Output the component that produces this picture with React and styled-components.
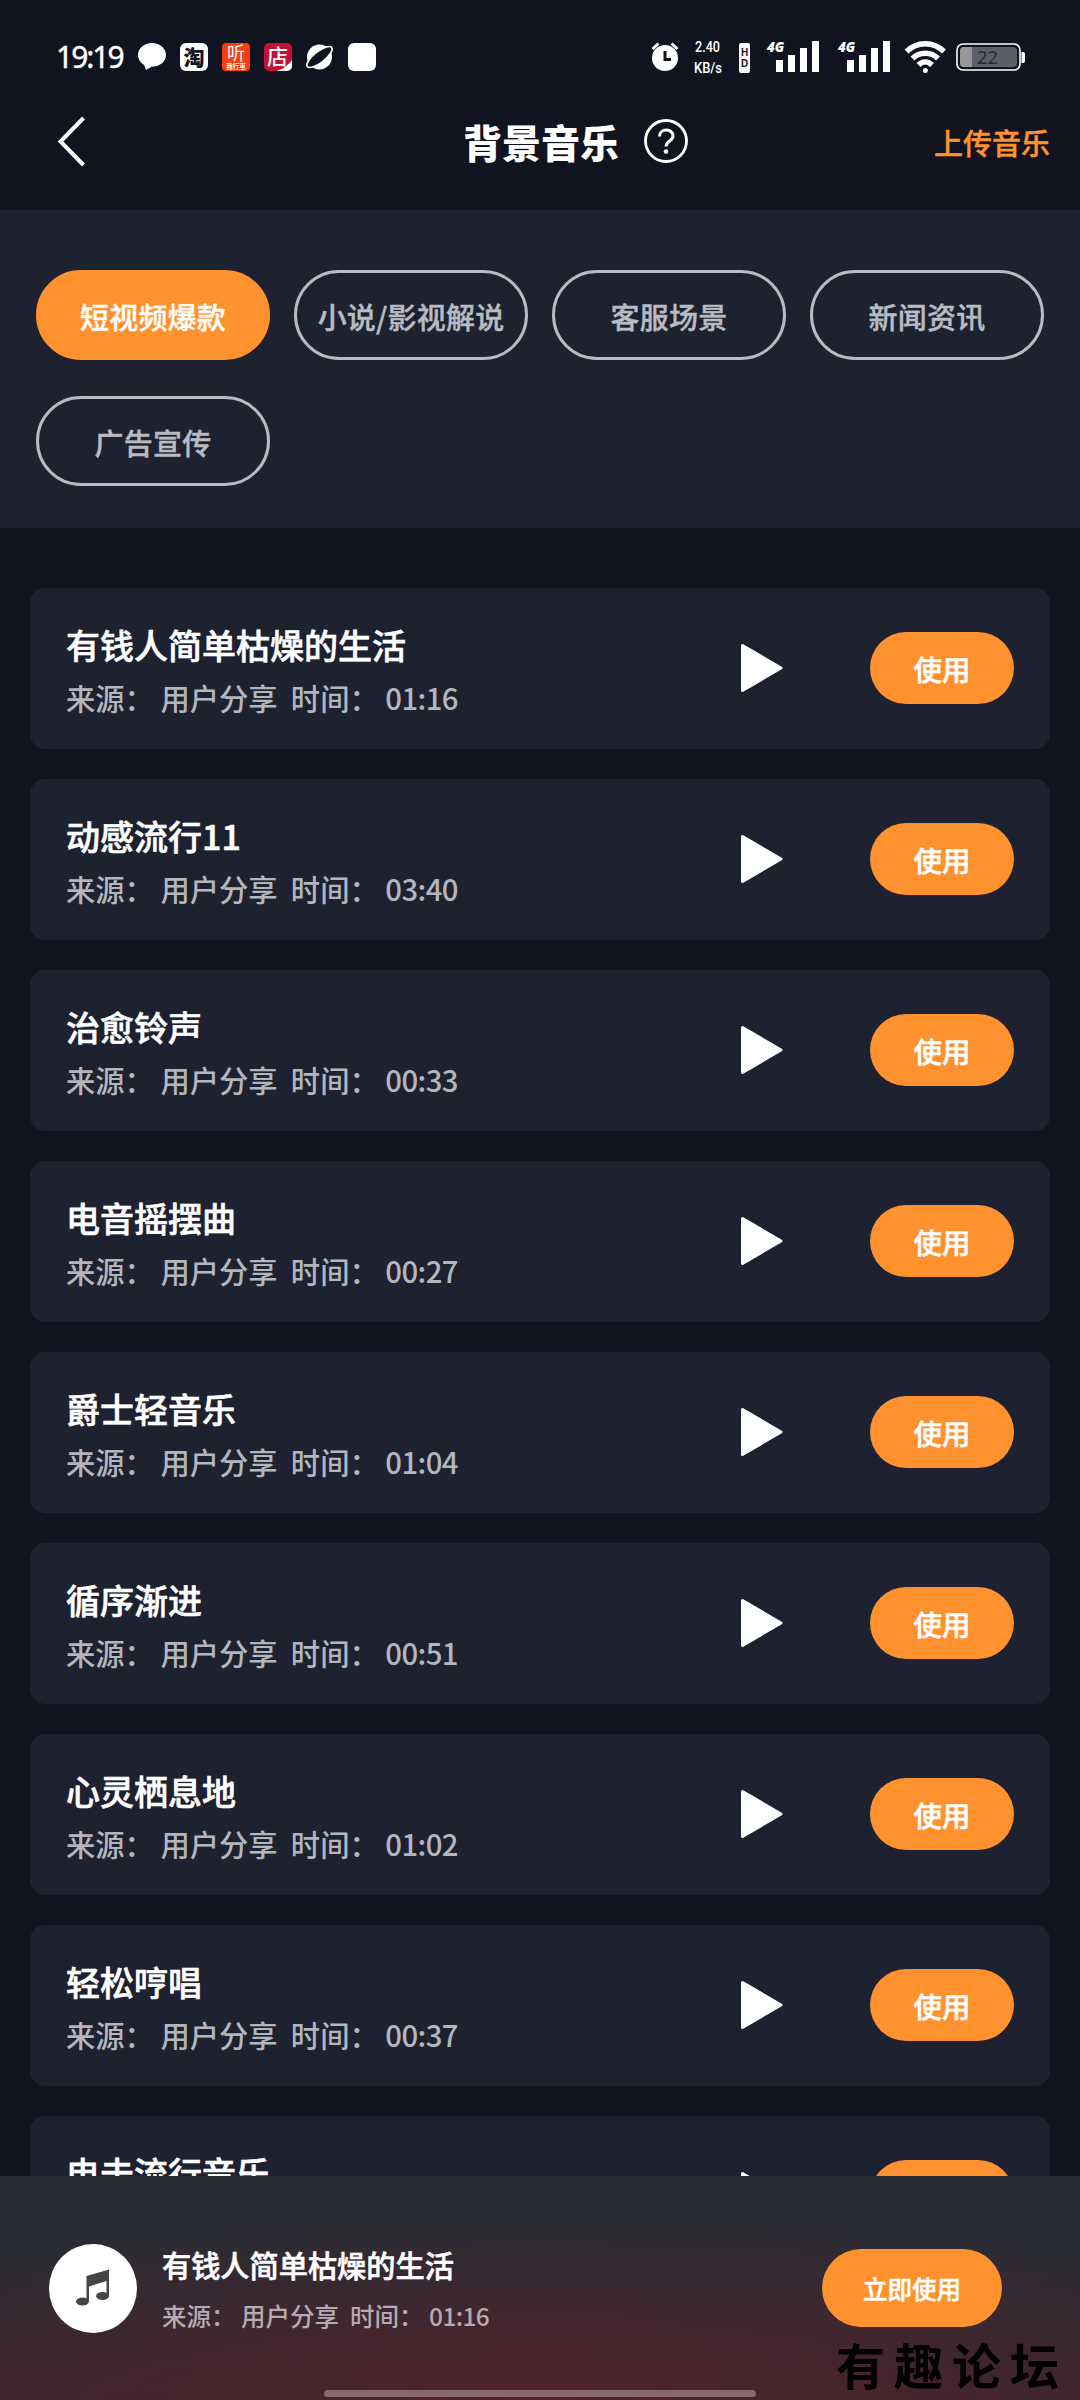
import React from 'react';
import styled, { createGlobalStyle } from 'styled-components';

const GlobalStyle = createGlobalStyle`
  * {
    box-sizing: border-box;
  }
  body {
    margin: 0;
    background: #111320;
    font-family: 'Noto Sans CJK SC', sans-serif;
  }
  button {
    border: 0;
    padding: 0;
    font-family: inherit;
  }
`;

const Screen = styled.div`
  display: flex;
  flex-direction: column;
  width: 1080px;
  height: 2400px;
  overflow: hidden;
  background: #111320;
  color: #fff;
`;

const StatusBar = styled.div`
  display: flex;
  justify-content: space-between;
  flex: none;
  height: 90px;
  padding: 24px 53px 0 56px;
`;

const StatusGroup = styled.div`
  display: flex;
  align-items: center;
  height: 66px;
  padding-top: ${(props) => (props.$system ? '6px' : '0')};
`;

const Clock = styled.span`
  width: 68px;
  margin-right: 14px;
  font-family: 'Noto Sans', sans-serif;
  font-size: 30px;
  line-height: 66px;
  letter-spacing: -2px;
  white-space: nowrap;
  -webkit-text-stroke: 0.4px currentColor;
`;

const StatusSvg = styled.svg`
  display: block;
  flex: none;
  overflow: visible;
`;

const Header = styled.header`
  display: grid;
  grid-template-columns: 180px 1fr 180px;
  align-items: center;
  flex: none;
  height: 120px;
  padding: 0 30px 18px;
`;

const BackButton = styled.button`
  width: 60px;
  height: 60px;
  background: none;
`;

const PageTitle = styled.h1`
  display: flex;
  align-items: center;
  justify-content: center;
  gap: 24px;
  margin: 0;
  padding-left: 72px;
  font-size: 39px;
  font-weight: 900;
  line-height: 60px;
`;

const UploadLink = styled.a`
  justify-self: end;
  padding-top: 2px;
  color: #ff922f;
  font-size: 29px;
  font-weight: 500;
  -webkit-text-stroke: 0.4px currentColor;
`;

const Categories = styled.nav`
  display: flex;
  flex-wrap: wrap;
  align-content: flex-start;
  gap: 36px 24px;
  flex: none;
  height: 318px;
  padding: 60px 36px 0;
  background: #1e2130;
`;

const Category = styled.button`
  width: 234px;
  height: 90px;
  padding-top: 2px;
  border: 3px solid ${(props) => (props.$active ? '#ff922f' : '#b9bbc4')};
  border-radius: 45px;
  background: ${(props) => (props.$active ? '#ff922f' : 'transparent')};
  color: ${(props) => (props.$active ? '#fff' : '#b9bbc4')};
  font-size: 29px;
  font-weight: 500;
  letter-spacing: 0.2px;
  white-space: nowrap;
  -webkit-text-stroke: 0.4px currentColor;
`;

const TrackList = styled.main`
  display: flex;
  flex-direction: column;
  gap: 30px;
  flex: 1;
  min-height: 0;
  padding: 60px 30px 0;
  overflow: hidden;
`;

const TrackRow = styled.div`
  display: flex;
  align-items: center;
  flex: none;
  height: 161px;
  padding: 0 36px 1px;
  border-radius: 15px;
  background: #1e2130;
`;

const TrackInfo = styled.div`
  flex: 1;
  padding-top: ${(props) => (props.$small ? '2px' : '6px')};
`;

const TrackName = styled.div`
  color: #fff;
  font-size: ${(props) => (props.$small ? '29.2px' : '34px')};
  font-weight: 500;
  line-height: ${(props) => (props.$small ? '42px' : '50px')};
  -webkit-text-stroke: 0.6px currentColor;
`;

const TrackMeta = styled.div`
  margin-top: ${(props) => (props.$small ? '11px' : '2px')};
  color: ${(props) => (props.$small ? '#b5abb0' : '#b4b6be')};
  font-size: ${(props) => (props.$small ? '24.5px' : '29.3px')};
  font-weight: 500;
  line-height: ${(props) => (props.$small ? '40px' : '50px')};
  white-space: pre;
`;

const Duration = styled.span`
  letter-spacing: -0.6px;
`;

const PlayButton = styled.button`
  width: 44px;
  height: 50px;
  margin-right: 86px;
  background: none;
`;

const UseButton = styled.button`
  width: ${(props) => (props.$large ? '180px' : '144px')};
  height: ${(props) => (props.$large ? '78px' : '72px')};
  padding-top: 1px;
  border-radius: 39px;
  background: #ff922f;
  color: #fff;
  font-size: ${(props) => (props.$large ? '24.5px' : '28.5px')};
  font-weight: 500;
  -webkit-text-stroke: 0.5px currentColor;
`;

const Player = styled.footer`
  position: relative;
  display: flex;
  align-items: center;
  flex: none;
  height: 224px;
  padding: 0 78px 0 49px;
  background:
    radial-gradient(ellipse 900px 190px at 50% 100%, rgba(90, 32, 42, 0.75), rgba(90, 32, 42, 0) 100%),
    linear-gradient(#292c33 0%, #2a2c33 35%, #35282f 100%);
`;

const Cover = styled.div`
  display: flex;
  align-items: center;
  justify-content: center;
  width: 88px;
  height: 89px;
  margin-right: 25px;
  border-radius: 50%;
  background: #fff;
`;

const HomeBar = styled.div`
  position: absolute;
  left: 324px;
  bottom: 3px;
  width: 432px;
  height: 7px;
  border-radius: 4px;
  background: #87696e;
`;

const Watermark = styled.div`
  position: absolute;
  right: 12px;
  bottom: 6px;
  color: #000;
  font-size: 49px;
  font-weight: 700;
  line-height: 60px;
  letter-spacing: 9px;
`;

const categories = ['短视频爆款', '小说/影视解说', '客服场景', '新闻资讯', '广告宣传'];

const tracks = [
  { name: '有钱人简单枯燥的生活', time: '01:16' },
  { name: '动感流行11', time: '03:40' },
  { name: '治愈铃声', time: '00:33' },
  { name: '电音摇摆曲', time: '00:27' },
  { name: '爵士轻音乐', time: '01:04' },
  { name: '循序渐进', time: '00:51' },
  { name: '心灵栖息地', time: '01:02' },
  { name: '轻松哼唱', time: '00:37' },
  { name: '电击流行音乐' },
];

const cjk = "'Noto Sans CJK SC', sans-serif";

const NotificationIcons = () => (
  <StatusSvg width="240" height="30" viewBox="0 0 240 30">
    <path fill="#fff" d="M14 1C6.300 1 0 6.100 0 13c0 4.200 2.400 7.600 6 9.800L8 28l5.500-3.200C21.500 24.800 28 19.800 28 13S21.700 1 14 1z" />
    <rect x="42" y="1" width="28" height="28" rx="6" fill="#fff" />
    <text x="56" y="22.500" textAnchor="middle" fontFamily={cjk} fontSize="21" fontWeight="900" fill="#111320">淘</text>
    <rect x="84" y="1" width="28" height="28" rx="4" fill="#fa3c14" />
    <text x="98" y="18" textAnchor="middle" fontFamily={cjk} fontSize="18" fill="#fff">听</text>
    <text x="98" y="27" textAnchor="middle" fontFamily={cjk} fontSize="6.500" fontWeight="700" fill="#fff">我行車</text>
    <rect x="126" y="1" width="28" height="28" rx="5" fill="#c40f36" />
    <path d="M138 29c5-1 12-5 16-11v6a5 5 0 0 1-5 5z" fill="#fff" />
    <text x="139.500" y="21.500" textAnchor="middle" fontFamily={cjk} fontSize="21" fontWeight="500" fill="#fff">店</text>
    <g transform="translate(181.500 15)">
      <circle r="12.500" fill="#fff" />
      <ellipse rx="15.500" ry="5.500" transform="rotate(-38)" fill="#111320" stroke="#fff" strokeWidth="1.700" />
    </g>
    <rect x="210" y="1" width="28" height="28" rx="6" fill="#fff" />
  </StatusSvg>
);

const Signal = ({ x }) => (
  <g transform={`translate(${x} 0)`}>
    <text x="0" y="12" fontFamily="'Open Sans', sans-serif" fontSize="13.500" fontWeight="800" fontStyle="italic" fill="#fff">4G</text>
    <path fill="#fff" d="M9 20h7v12H9zM21 15h7v17h-7zM33 8h7v24h-7zM45 1h7v31h-7z" />
  </g>
);

const SystemIcons = () => (
  <StatusSvg width="376" height="40" viewBox="0 0 376 40">
    <g>
      <circle cx="14" cy="18" r="13" fill="#fff" />
      <path d="M1.500 9l6-5.500M26.500 9l-6-5.500" stroke="#fff" strokeWidth="3" />
      <path d="M14 11v8.500h6" fill="none" stroke="#111320" strokeWidth="3" />
    </g>
    <g fontFamily="Roboto, sans-serif" fontWeight="500" fill="#fff">
      <text x="44" y="11.500" fontSize="15" textLength="25" lengthAdjust="spacingAndGlyphs">2.40</text>
      <text x="43" y="33" fontSize="14" textLength="28" lengthAdjust="spacingAndGlyphs">KB/s</text>
    </g>
    <rect x="88" y="3" width="11" height="30" rx="2" fill="#fff" />
    <g fontFamily="'Liberation Sans', sans-serif" fontSize="10" fontWeight="700" fill="#111320" textAnchor="middle">
      <text x="93.500" y="16">H</text>
      <text x="93.500" y="27">D</text>
    </g>
    <Signal x={116} />
    <Signal x={187} />
    <g fill="none" stroke="#fff" strokeWidth="5.500">
      <path d="M255.500 11.500c10.500-10.500 27-10.500 37.500 0" />
      <path d="M261.500 18.500c7-7 18.500-7 25.500 0" />
      <path d="M267.500 25c4-4 9.500-4 13.500 0" />
    </g>
    <circle cx="274.300" cy="30.500" r="2.500" fill="#fff" />
    <rect x="306" y="4" width="63" height="26" rx="6" fill="none" stroke="#fff" strokeWidth="1.600" />
    <rect x="309" y="7" width="57" height="20" rx="4" fill="#5c5e68" />
    <path d="M313 7h8v20h-8a4 4 0 0 1-4-4V11a4 4 0 0 1 4-4z" fill="#97979a" />
    <text x="336.500" y="24" textAnchor="middle" fontFamily="'Noto Sans', sans-serif" fontSize="18.500" fill="#282b36">22</text>
    <path d="M370.500 12h1.500a2 2 0 0 1 2 2v7a2 2 0 0 1-2 2h-1.500z" fill="#fff" />
  </StatusSvg>
);

const Meta = ({ time, small }) => (
  <TrackMeta $small={small}>
    来源： 用户分享{'  '}时间： <Duration>{time}</Duration>
  </TrackMeta>
);

const App = () => (
  <Screen>
    <GlobalStyle />
    <StatusBar>
      <StatusGroup>
        <Clock>19:19</Clock>
        <NotificationIcons />
      </StatusGroup>
      <StatusGroup $system>
        <SystemIcons />
      </StatusGroup>
    </StatusBar>
    <Header>
      <BackButton>
        <svg width="60" height="60" viewBox="0 0 60 60">
          <path d="M53.500 7L30.500 30.500l23 23.500" fill="none" stroke="#fff" strokeWidth="4" />
        </svg>
      </BackButton>
      <PageTitle>
        背景音乐
        <svg width="46" height="46" viewBox="0 0 46 46" fill="none" stroke="#fff">
          <circle cx="23" cy="23" r="20.500" strokeWidth="2.800" />
          <path d="M16.500 18.500c0-8.500 13.500-8.500 13.500-.5 0 5-7 5-7 10.500" strokeWidth="3" />
          <circle cx="23" cy="33.500" r="2.300" fill="#fff" stroke="none" />
        </svg>
      </PageTitle>
      <UploadLink>上传音乐</UploadLink>
    </Header>
    <Categories>
      {categories.map((name, i) => (
        <Category key={name} $active={i === 0}>
          {name}
        </Category>
      ))}
    </Categories>
    <TrackList>
      {tracks.map(({ name, time }) => (
        <TrackRow key={name}>
          <TrackInfo>
            <TrackName>{name}</TrackName>
            {/* the last row is mostly under the player */}
            {time ? <Meta time={time} /> : <TrackMeta> </TrackMeta>}
          </TrackInfo>
          <PlayButton>
            <svg width="44" height="50" viewBox="0 0 44 50">
              <path d="M2.500 2.500L41 25 2.500 47.500z" fill="#fff" stroke="#fff" strokeWidth="3" strokeLinejoin="round" />
            </svg>
          </PlayButton>
          <UseButton>{time && '使用'}</UseButton>
        </TrackRow>
      ))}
    </TrackList>
    <Player>
      <Cover>
        <svg width="36" height="40" viewBox="0 0 36 40" fill="#454545">
          <path d="M11.500 8L34 1.500V28h-2.500V13L14 18.500V33h-2.500z" />
          <ellipse cx="7.500" cy="33.500" rx="6.500" ry="4" />
          <ellipse cx="27.500" cy="28" rx="6.500" ry="4" />
        </svg>
      </Cover>
      <TrackInfo $small>
        <TrackName $small>{tracks[0].name}</TrackName>
        <Meta time={tracks[0].time} small />
      </TrackInfo>
      <UseButton $large>立即使用</UseButton>
      <HomeBar />
      <Watermark>有趣论坛</Watermark>
    </Player>
  </Screen>
);

export default App;
